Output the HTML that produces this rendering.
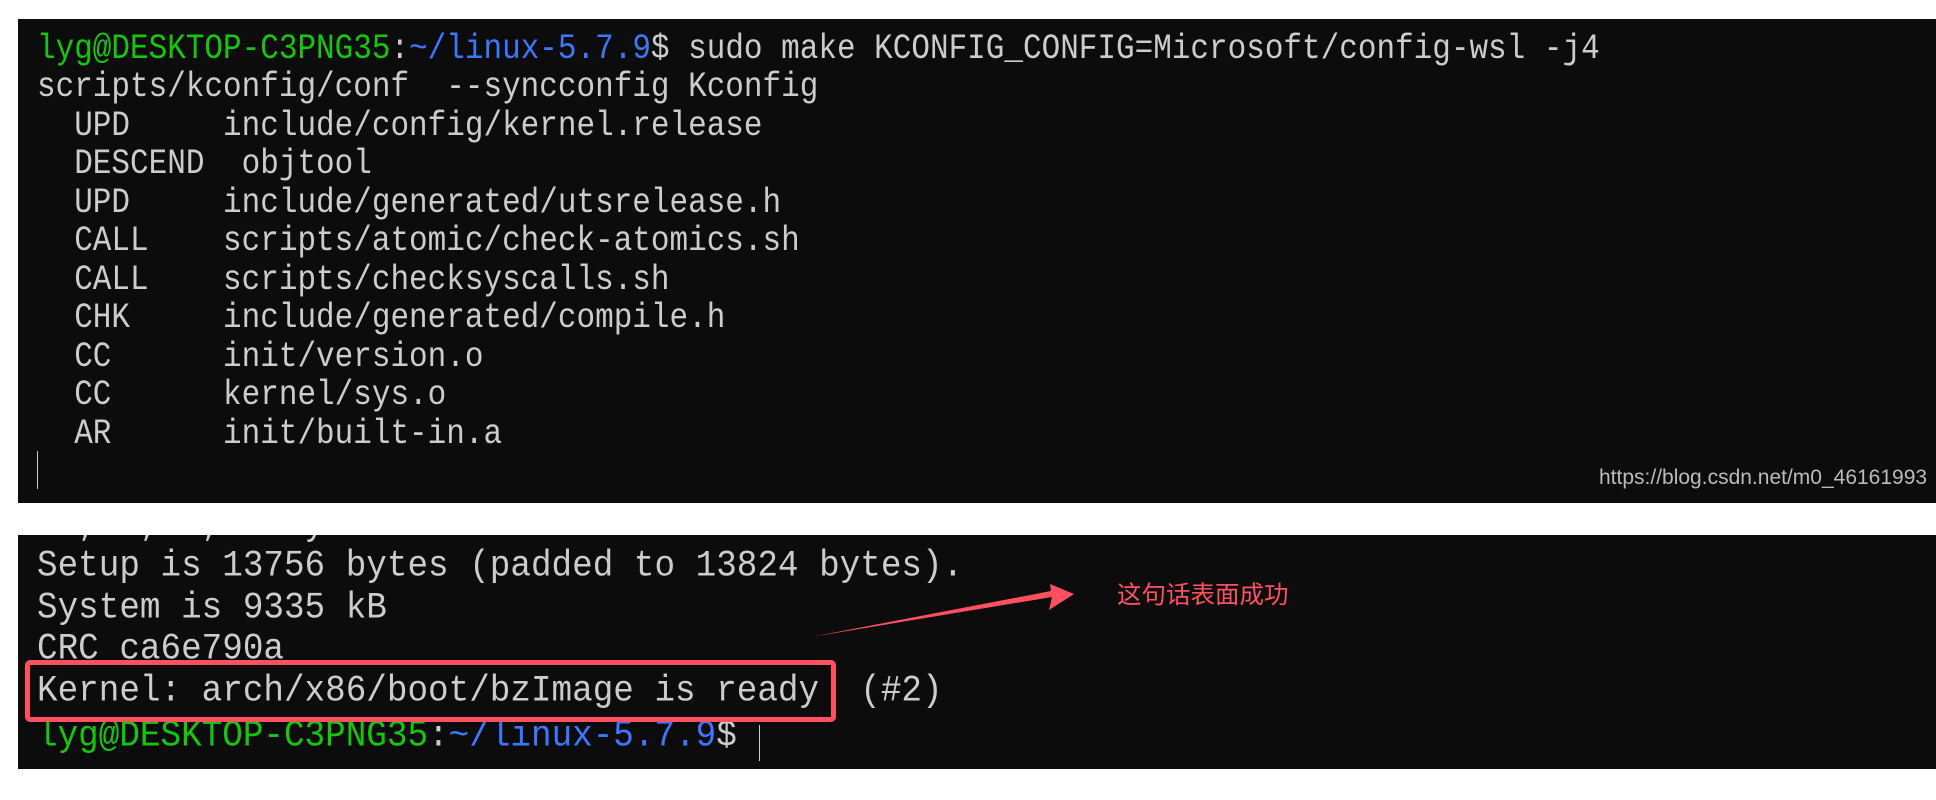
<!DOCTYPE html>
<html><head><meta charset="utf-8"><style>
body{margin:0;width:1936px;height:800px;background:#fff;position:relative;overflow:hidden;font-family:"Liberation Mono","DejaVu Sans Mono",monospace;}
.t{position:absolute;left:18px;right:0;background:#0c0c0c;overflow:hidden;}
.l{position:absolute;left:19px;font-size:34.3px;line-height:38px;color:#cccccc;white-space:pre;transform:scaleY(1.08);transform-origin:0 50%;}
.s{font-size:31px;transform:scaleY(1.15);}
.g{color:#16c60c}.b{color:#3b78ff}
</style></head><body>
<div class="t" style="top:19px;height:484px;">
<div class="l s" style="top:12px"><span class="g">lyg@DESKTOP-C3PNG35</span>:<span class="b">~/linux-5.7.9</span>$ sudo make KCONFIG_CONFIG=Microsoft/config-wsl -j4</div>
<div class="l s" style="top:50px">scripts/kconfig/conf  --syncconfig Kconfig</div>
<div class="l s" style="top:89px">  UPD     include/config/kernel.release</div>
<div class="l s" style="top:127px">  DESCEND  objtool</div>
<div class="l s" style="top:166px">  UPD     include/generated/utsrelease.h</div>
<div class="l s" style="top:204px">  CALL    scripts/atomic/check-atomics.sh</div>
<div class="l s" style="top:243px">  CALL    scripts/checksyscalls.sh</div>
<div class="l s" style="top:281px">  CHK     include/generated/compile.h</div>
<div class="l s" style="top:320px">  CC      init/version.o</div>
<div class="l s" style="top:358px">  CC      kernel/sys.o</div>
<div class="l s" style="top:397px">  AR      init/built-in.a</div>
<div style="position:absolute;left:19px;top:432px;width:1px;height:38px;background:#ccc"></div>
<div style="position:absolute;left:1581px;top:447px;font-family:'Liberation Sans',sans-serif;font-size:21px;color:#bbb;">https://blog.csdn.net/m0_46161993</div>
</div>
<div class="t" style="top:535px;height:234px;">
<div class="l" style="top:-28px">  ,  ,  ,    y</div>
<div class="l" style="top:13px">Setup is 13756 bytes (padded to 13824 bytes).</div>
<div class="l" style="top:55px">System is 9335 kB</div>
<div class="l" style="top:96px">CRC ca6e790a</div>
<div class="l" style="top:138px">Kernel: arch/x86/boot/bzImage is ready  (#2)</div>
<div class="l" style="top:183px"><span class="g">lyg@DESKTOP-C3PNG35</span>:<span class="b">~/linux-5.7.9</span>$ </div>
<div style="position:absolute;left:741px;top:190px;width:1px;height:36px;background:#ccc"></div>
</div>
<div style="position:absolute;left:25px;top:660px;width:801px;height:52px;border:5px solid #ff5060;border-radius:5px;"></div>
<svg style="position:absolute;left:0;top:0" width="1936" height="800"><polygon points="811,637 1052,597 1049,610 1074,594 1050,584 1051,591" fill="#ff5060"/></svg>
<div style="position:absolute;left:1117px;top:580px;font-family:'Liberation Sans','Noto Sans CJK SC',sans-serif;font-size:24.5px;line-height:32px;color:#ff5060;">这句话表面成功</div>
</body></html>
